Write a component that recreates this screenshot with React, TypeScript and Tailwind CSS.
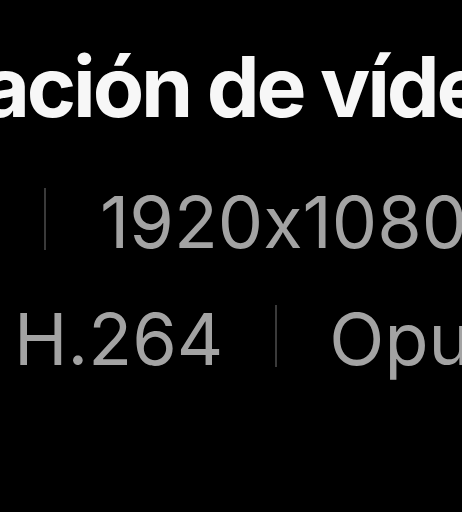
import React from 'react';

function Divider() {
  return <span className="mx-[52px] mb-[6px] h-[62px] w-[2px] shrink-0 bg-[#3a3a3a]" />;
}

export default function App() {
  return (
    <div className="h-[512px] w-full overflow-hidden bg-black font-['Inter','Liberation_Sans',sans-serif] [font-feature-settings:'calt'_0]">
      <div className="pt-[45px] whitespace-nowrap">
        <h1 className="ml-[-270px] text-[84px] font-bold leading-none tracking-[-3.2px] text-[#f7f7f7]">
          Información de vídeo
        </h1>
      </div>

      <div className="mt-[57px] flex items-center whitespace-nowrap pl-[44px] text-[72px] leading-none text-[#a3a3a3]">
        <span className="mb-[6px] h-[62px] w-[2px] shrink-0 bg-[#3a3a3a]" />
        <span className="ml-[54px]">1920x1080</span>
      </div>

      <div className="mt-[45px] flex items-center whitespace-nowrap pl-[14px] text-[72px] leading-none text-[#a3a3a3]">
        <span>H.264</span>
        <Divider />
        <span>Opus</span>
      </div>
    </div>
  );
}
